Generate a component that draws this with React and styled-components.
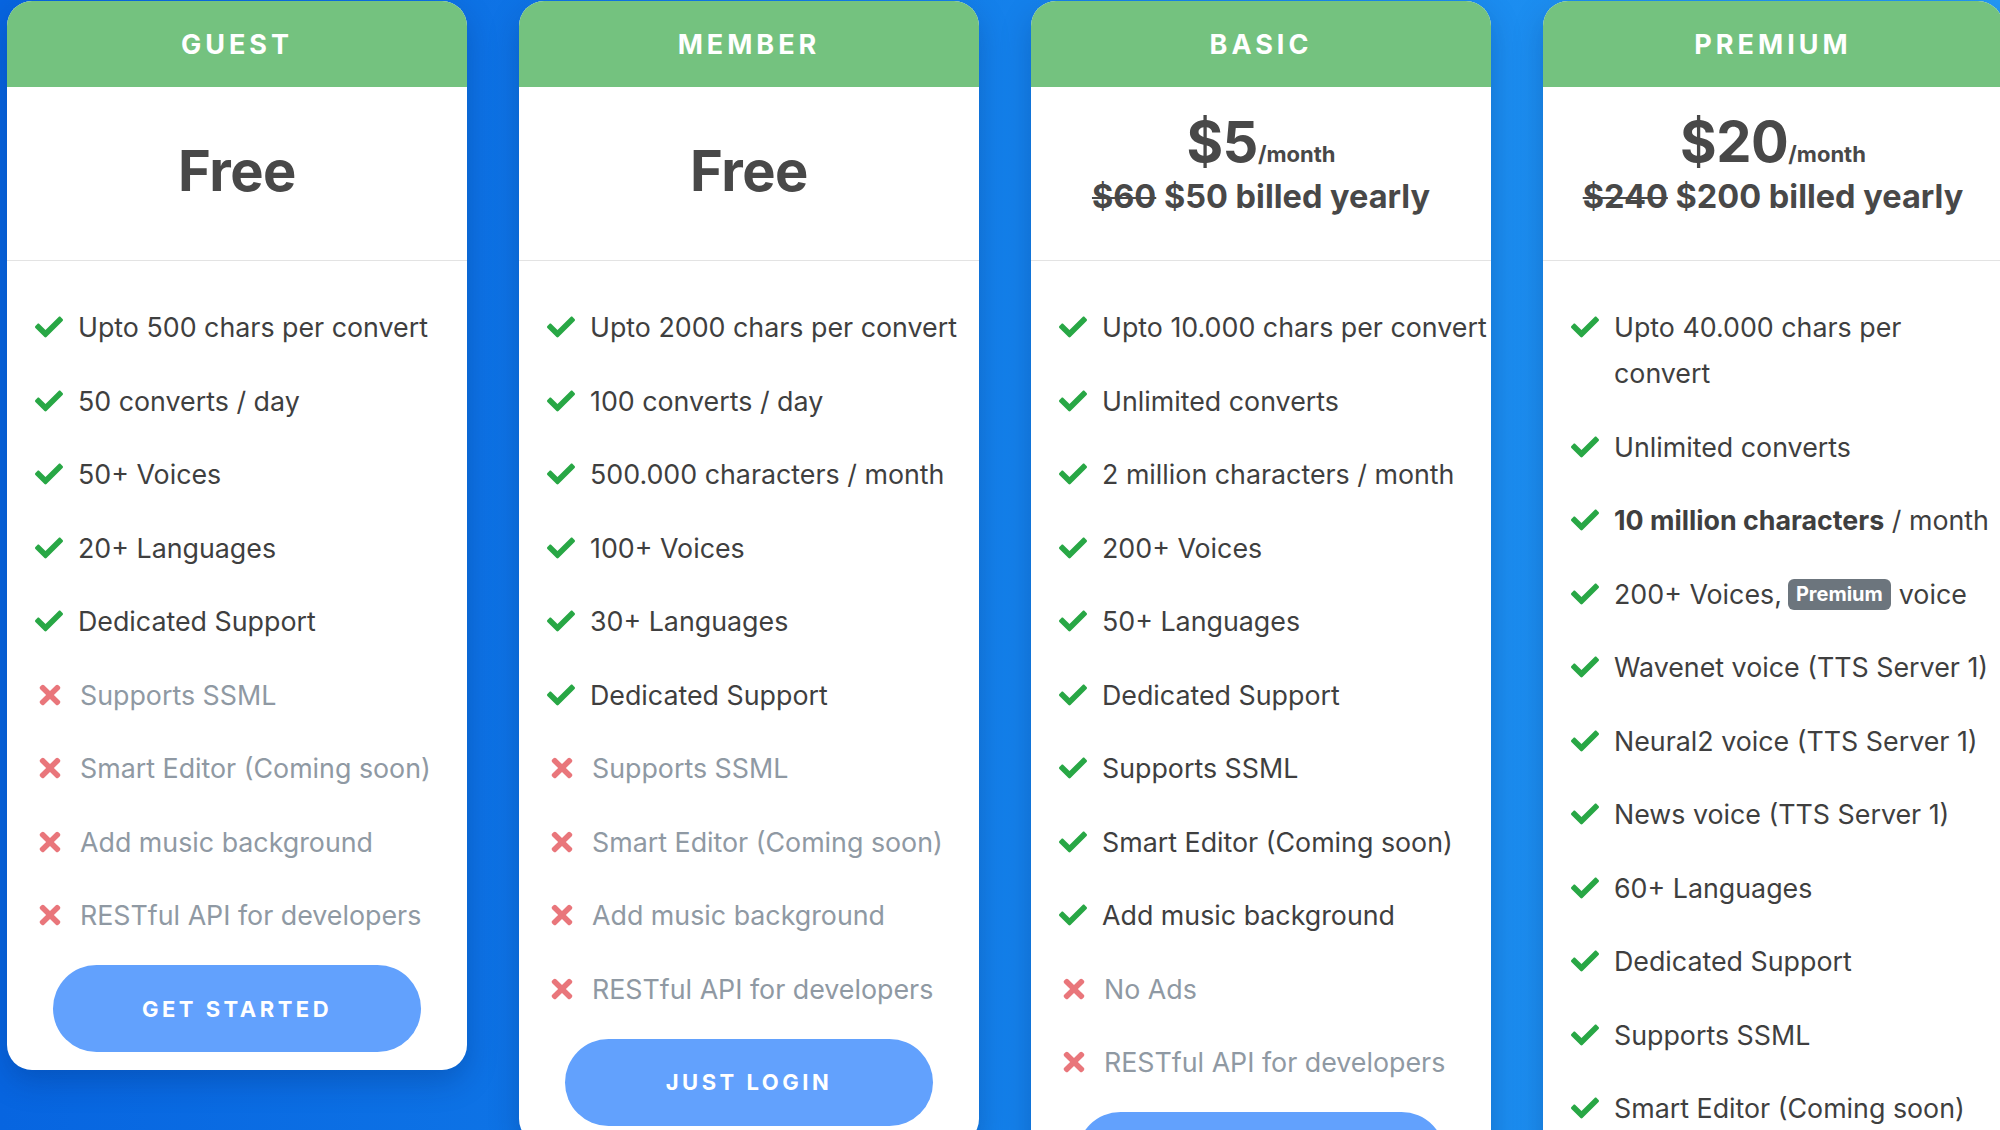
import React from 'react';
import styled, { createGlobalStyle } from 'styled-components';
import { FaCheck, FaTimes } from 'react-icons/fa';

const GlobalStyle = createGlobalStyle`
  html, body {
    margin: 0;
    padding: 0;
  }
  body {
    font-family: Inter, "Noto Sans", sans-serif;
  }
`;

const Page = styled.div`
  width: 2000px;
  height: 1130px;
  overflow: hidden;
  box-sizing: border-box;
  padding: 1px 0 0 7px;
  display: flex;
  align-items: flex-start;
  gap: 52px;
  background: linear-gradient(90deg, #0765e0 0%, #1583ec 55%, #2399f5 100%);
`;

const Card = styled.div`
  flex: 0 0 460px;
  background: #fff;
  border-radius: 25px;
  overflow: hidden;
  padding-bottom: 18px;
  box-shadow: 0 12px 30px rgba(0, 30, 90, 0.25);
`;

const Header = styled.div`
  height: 86px;
  background: #74c27f;
  color: #fff;
  display: flex;
  align-items: center;
  justify-content: center;
  font-size: 27px;
  font-weight: 700;
  letter-spacing: 4px;
`;

const PriceBox = styled.div`
  height: 174px;
  box-sizing: border-box;
  border-bottom: 1px solid #e3e3e3;
  padding-bottom: ${p => (p.$yearly ? 11 : 6)}px;
  display: flex;
  flex-direction: column;
  justify-content: center;
  align-items: center;
  color: #484848;
  font-weight: 700;
`;

const Amount = styled.div`
  font-size: 56px;
  line-height: ${p => (p.$yearly ? '44px' : '56px')};
  letter-spacing: -0.5px;
`;

const Per = styled.span`
  font-size: 22px;
  letter-spacing: 0;
`;

const Yearly = styled.div`
  font-size: 32.5px;
  line-height: 41px;
`;

const Old = styled.s`
  text-decoration-thickness: 2px;
`;

const List = styled.ul`
  list-style: none;
  margin: 0;
  padding: 43px 0 0 28px;
  display: flex;
  flex-direction: column;
  gap: 27.5px;
`;

const Item = styled.li`
  display: flex;
  align-items: flex-start;
  font-size: 26.8px;
  line-height: 46px;
  white-space: nowrap;
  color: ${p => (p.$off ? '#8f99a3' : '#3f3f3f')};
`;

const Icon = styled.span`
  flex: 0 0 28px;
  height: 46px;
  margin-right: 15px;
  display: flex;
  align-items: center;
  justify-content: center;
  color: ${p => (p.$off ? '#e9767b' : '#28a745')};
`;

const Badge = styled.span`
  display: inline-block;
  background: #6c757d;
  color: #fff;
  font-size: 20px;
  font-weight: 700;
  line-height: 22px;
  padding: 4px 8px 5px;
  border-radius: 6px;
  margin: 0 8px 0 6px;
  vertical-align: 3px;
`;

const Button = styled.button`
  display: block;
  width: 368px;
  height: 87px;
  margin: 27px auto 0;
  border: none;
  border-radius: 44px;
  background: #62a1fd;
  color: #fff;
  font-family: inherit;
  font-size: 22px;
  font-weight: 700;
  letter-spacing: 3.5px;
`;

const plans = [
  {
    name: 'GUEST',
    free: true,
    button: 'GET STARTED',
    features: [
      ['Upto 500 chars per convert'],
      ['50 converts / day'],
      ['50+ Voices'],
      ['20+ Languages'],
      ['Dedicated Support'],
      ['Supports SSML', true],
      ['Smart Editor (Coming soon)', true],
      ['Add music background', true],
      ['RESTful API for developers', true],
    ],
  },
  {
    name: 'MEMBER',
    free: true,
    button: 'JUST LOGIN',
    features: [
      ['Upto 2000 chars per convert'],
      ['100 converts / day'],
      ['500.000 characters / month'],
      ['100+ Voices'],
      ['30+ Languages'],
      ['Dedicated Support'],
      ['Supports SSML', true],
      ['Smart Editor (Coming soon)', true],
      ['Add music background', true],
      ['RESTful API for developers', true],
    ],
  },
  {
    name: 'BASIC',
    price: '$5',
    old: '$60',
    year: '$50',
    button: 'BUY NOW',
    features: [
      ['Upto 10.000 chars per convert'],
      ['Unlimited converts'],
      ['2 million characters / month'],
      ['200+ Voices'],
      ['50+ Languages'],
      ['Dedicated Support'],
      ['Supports SSML'],
      ['Smart Editor (Coming soon)'],
      ['Add music background'],
      ['No Ads', true],
      ['RESTful API for developers', true],
    ],
  },
  {
    name: 'PREMIUM',
    price: '$20',
    old: '$240',
    year: '$200',
    button: 'BUY NOW',
    features: [
      [<>Upto 40.000 chars per<br />convert</>],
      ['Unlimited converts'],
      [<><b>10 million characters</b> / month</>],
      [<>200+ Voices,<Badge>Premium</Badge>voice</>],
      ['Wavenet voice (TTS Server 1)'],
      ['Neural2 voice (TTS Server 1)'],
      ['News voice (TTS Server 1)'],
      ['60+ Languages'],
      ['Dedicated Support'],
      ['Supports SSML'],
      ['Smart Editor (Coming soon)'],
      ['Add music background'],
      ['No Ads'],
      ['RESTful API for developers'],
    ],
  },
];

const PlanCard = ({ plan }) => (
  <Card>
    <Header>{plan.name}</Header>
    <PriceBox $yearly={!plan.free}>
      {plan.free ? (
        <Amount>Free</Amount>
      ) : (
        <>
          <Amount $yearly>
            {plan.price}
            <Per>/month</Per>
          </Amount>
          <Yearly>
            <Old>{plan.old}</Old> {plan.year} billed yearly
          </Yearly>
        </>
      )}
    </PriceBox>
    <List>
      {plan.features.map(([label, off], i) => (
        <Item key={i} $off={off}>
          <Icon $off={off}>{off ? <FaTimes size={30} /> : <FaCheck size={28} />}</Icon>
          <span>{label}</span>
        </Item>
      ))}
    </List>
    <Button>{plan.button}</Button>
  </Card>
);

export default function App() {
  return (
    <>
      <GlobalStyle />
      <Page>
        {plans.map(p => (
          <PlanCard key={p.name} plan={p} />
        ))}
      </Page>
    </>
  );
}
